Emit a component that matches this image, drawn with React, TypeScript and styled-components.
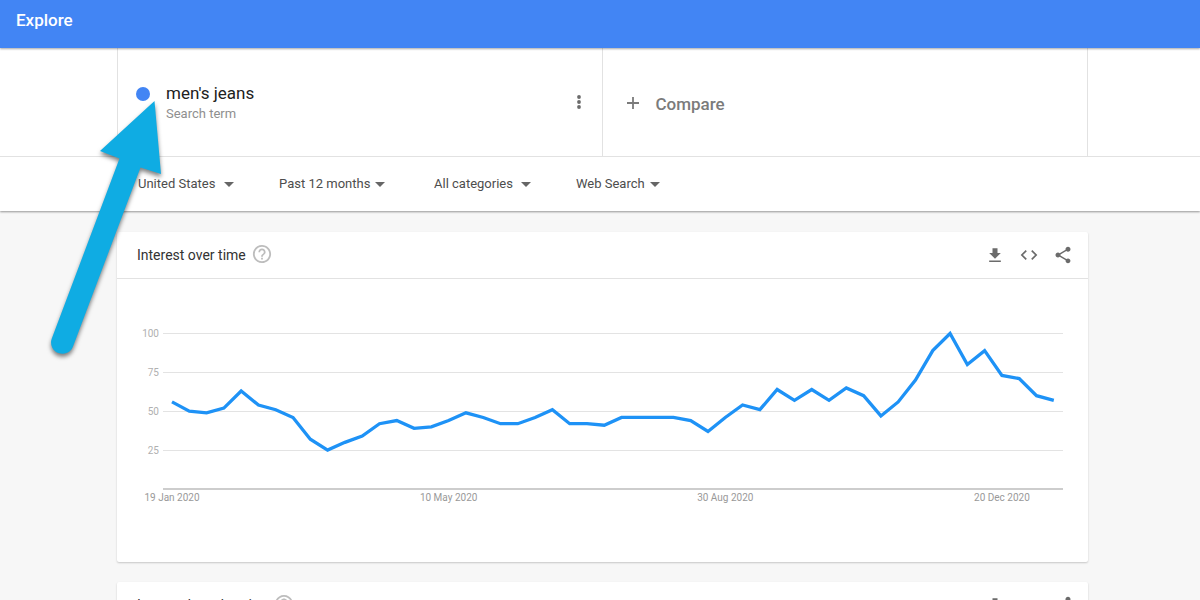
import React from "react";
import styled, { createGlobalStyle } from "styled-components";

const GlobalStyle = createGlobalStyle`
  *, *::before, *::after { box-sizing: border-box; }
  body {
    margin: 0;
    background: #f7f7f7;
    color: #212121;
    font-family: Roboto, "Liberation Sans", sans-serif;
  }
`;

const Page = styled.div`
  position: relative;
  height: 100vh;
  overflow: hidden;
`;

const AppBar = styled.header`
  position: relative;
  z-index: 1;
  display: flex;
  align-items: center;
  height: 48px;
  padding: 0 16px 8px;
  background: #4285f4;
  box-shadow: 0 1px 2px rgba(0, 0, 0, 0.35);
`;

const AppTitle = styled.h1`
  margin: 0;
  color: #fff;
  font-size: 17px;
  font-weight: 500;
  line-height: 24px;
`;

const Controls = styled.section`
  position: relative;
  background: #fff;
  box-shadow: 0 1px 2px rgba(0, 0, 0, 0.4);
`;

const TermBar = styled.div`
  padding: 0 112px 0 117px;
  border-bottom: 1px solid #e2e2e2;
`;

const Terms = styled.div`
  display: grid;
  grid-template-columns: 1fr 1fr;
  height: 108px;
  border: solid #e2e2e2;
  border-width: 0 1px;
`;

const Term = styled.div`
  display: flex;
  align-items: flex-start;
  padding: 33px 15px 0 18px;
  border-right: 1px solid #e2e2e2;
`;

const Dot = styled.span`
  width: 14px;
  height: 14px;
  margin: 6px 16px 0 0;
  border-radius: 50%;
  background: #4285f4;
`;

const TermText = styled.div`
  flex: 1;
`;

const TermName = styled.div`
  font-size: 17px;
  line-height: 24px;
`;

const TermKind = styled.div`
  color: #8f8f8f;
  font-size: 13px;
  line-height: 18px;
`;

const IconButton = styled.button`
  display: flex;
  padding: 0;
  border: 0;
  background: none;
  color: #6b6b6b;
  cursor: pointer;
`;

const MenuButton = styled(IconButton)`
  margin-top: 13px;
`;

const CompareButton = styled.button`
  display: flex;
  align-items: center;
  gap: 13px;
  padding: 4px 0 0 20px;
  border: 0;
  background: none;
  color: #7b7b7b;
  font: 500 17px/24px Roboto, "Liberation Sans", sans-serif;
  cursor: pointer;
`;

const Filters = styled.div`
  display: grid;
  grid-template-columns: 141px 155px 142px auto;
  align-items: center;
  height: 54px;
  padding: 0 112px 0 138px;
`;

const FilterBox = styled.div<{ $width: number }>`
  position: relative;
  width: ${(p) => p.$width}px;
`;

const FilterSelect = styled.select`
  display: block;
  width: 100%;
  margin: 0;
  padding: 0;
  border: 0;
  appearance: none;
  background: none;
  color: #4d4d4d;
  font: 13px/20px Roboto, "Liberation Sans", sans-serif;
`;

const Caret = styled.svg`
  position: absolute;
  top: 8px;
  right: 0;
  pointer-events: none;
`;

const Main = styled.main`
  display: flex;
  flex-direction: column;
  gap: 20px;
  padding: 21px 112px 0 117px;
`;

const Card = styled.section`
  background: #fff;
  border-radius: 2px;
  box-shadow: 0 1px 2px rgba(0, 0, 0, 0.2);
`;

const CardHeader = styled.header`
  display: flex;
  align-items: center;
  height: 47px;
  padding: 0 15px 0 20px;
  border-bottom: 1px solid #e2e2e2;
`;

const CardTitle = styled.h2`
  margin: 0;
  color: #333;
  font-size: 14px;
  font-weight: 400;
  line-height: 20px;
`;

const HelpButton = styled(IconButton)`
  margin: 0 auto 2px 6px;
  color: #bdbdbd;
`;

const Actions = styled.div`
  display: flex;
  align-items: center;
  gap: 14px;
`;

const ChartBox = styled.div`
  padding-bottom: 1px;
`;

const ChartSvg = styled.svg`
  display: block;
  width: 100%;
  height: auto;
  font-family: Roboto, "Liberation Sans", sans-serif;
  font-size: 10px;
`;

const Pointer = styled.svg`
  position: absolute;
  top: 90px;
  left: 40px;
  z-index: 2;
  pointer-events: none;
  filter: drop-shadow(0 3px 2px rgba(0, 0, 0, 0.5));
`;

const WEEKLY = [
  56, 50, 49, 52, 63, 54, 51, 46, 32, 25, 30, 34, 42, 44, 39, 40, 44, 49, 46,
  42, 42, 46, 51, 42, 42, 41, 46, 46, 46, 46, 44, 37, 46, 54, 51, 64, 57, 64,
  57, 65, 60, 47, 56, 70, 89, 100, 80, 89, 73, 71, 60, 57,
];

const DATES = [
  { week: 0, label: "19 Jan 2020" },
  { week: 16, label: "10 May 2020" },
  { week: 32, label: "30 Aug 2020" },
  { week: 48, label: "20 Dec 2020" },
];

const weekX = (week: number) => 55 + week * 17.29;
const valueY = (value: number) => 210 - value * 1.555;

const FILTERS = [
  { name: "Region", value: "United States", width: 96 },
  { name: "Time range", value: "Past 12 months", width: 106 },
  { name: "Category", value: "All categories", width: 97 },
  { name: "Search type", value: "Web Search", width: 84 },
];

function HelpIcon() {
  return (
    <svg width="20" height="20" viewBox="1 1 22 22" fill="currentColor">
      <path d="M11 18h2v-2h-2v2zm1-16C6.480 2 2 6.480 2 12s4.480 10 10 10 10-4.480 10-10S17.520 2 12 2zm0 18c-4.410 0-8-3.590-8-8s3.590-8 8-8 8 3.590 8 8-3.590 8-8 8zm0-14c-2.210 0-4 1.790-4 4h2c0-1.100.9-2 2-2s2 .9 2 2c0 2-3 1.750-3 5h2c0-2.250 3-2.500 3-5 0-2.210-1.790-4-4-4z" />
    </svg>
  );
}

function DownloadIcon() {
  return (
    <svg width="20" height="20" viewBox="0 0 24 24" fill="currentColor">
      <path d="M19 9.500h-4V4H9v5.500H5l7 7 7-7zM5 18.500v2h14v-2H5z" />
    </svg>
  );
}

function EmbedIcon() {
  return (
    <svg width="20" height="20" viewBox="0 0 24 24" fill="currentColor">
      <path d="M9.400 16.600L4.800 12l4.600-4.600L8 6l-6 6 6 6 1.400-1.400zm5.200 0l4.600-4.600-4.600-4.600L16 6l6 6-6 6-1.400-1.400z" />
    </svg>
  );
}

function ShareIcon() {
  return (
    <svg width="20" height="20" viewBox="0 0 24 24" fill="currentColor">
      <path d="M18 16.080c-.76 0-1.440.3-1.960.77L8.910 12.700c.05-.23.09-.46.09-.7s-.04-.47-.09-.7l7.050-4.110c.54.5 1.250.81 2.040.81 1.660 0 3-1.340 3-3s-1.340-3-3-3-3 1.340-3 3c0 .24.04.47.09.7L8.040 9.810C7.500 9.310 6.790 9 6 9c-1.660 0-3 1.340-3 3s1.340 3 3 3c.79 0 1.500-.31 2.040-.81l7.120 4.160c-.05.21-.08.43-.08.65 0 1.610 1.310 2.920 2.920 2.920s2.920-1.310 2.920-2.920-1.310-2.920-2.920-2.920z" />
    </svg>
  );
}

function WidgetHeader({ title }: { title: string }) {
  return (
    <CardHeader>
      <CardTitle>{title}</CardTitle>
      <HelpButton aria-label="Help">
        <HelpIcon />
      </HelpButton>
      <Actions>
        <IconButton aria-label="Download">
          <DownloadIcon />
        </IconButton>
        <IconButton aria-label="Embed">
          <EmbedIcon />
        </IconButton>
        <IconButton aria-label="Share">
          <ShareIcon />
        </IconButton>
      </Actions>
    </CardHeader>
  );
}

function InterestChart() {
  const line = WEEKLY.map((v, i) => `${weekX(i)},${valueY(v)}`).join(" ");
  return (
    <ChartBox>
      <ChartSvg viewBox="0 0 971 282" role="img" aria-label="Interest over time">
        {[100, 75, 50, 25].map((v) => (
          <g key={v}>
            <line
              x1="46"
              x2="946"
              y1={Math.floor(valueY(v)) + 0.5}
              y2={Math.floor(valueY(v)) + 0.5}
              stroke="#e3e3e3"
            />
            <text x="42" y={Math.floor(valueY(v)) + 4} textAnchor="end" fill="#b0b0b0">
              {v}
            </text>
          </g>
        ))}
        <line x1="46" x2="946" y1="210" y2="210" stroke="#bdbdbd" strokeWidth="1.500" />
        <polyline points={line} fill="none" stroke="#1e92f6" strokeWidth="3.300" />
        {DATES.map((d) => (
          <text key={d.week} x={weekX(d.week)} y="222" textAnchor="middle" fill="#999">
            {d.label}
          </text>
        ))}
      </ChartSvg>
    </ChartBox>
  );
}

export default function App() {
  return (
    <Page>
      <GlobalStyle />
      <AppBar>
        <AppTitle>Explore</AppTitle>
      </AppBar>
      <Controls>
        <TermBar>
          <Terms>
            <Term>
              <Dot />
              <TermText>
                <TermName>men's jeans</TermName>
                <TermKind>Search term</TermKind>
              </TermText>
              <MenuButton aria-label="Term options">
                <svg width="16" height="16" viewBox="0 0 16 16" fill="currentColor">
                  <circle cx="8" cy="3" r="1.900" />
                  <circle cx="8" cy="8" r="1.900" />
                  <circle cx="8" cy="13" r="1.900" />
                </svg>
              </MenuButton>
            </Term>
            <CompareButton>
              <svg width="20" height="20" viewBox="0 0 20 20" stroke="currentColor" strokeWidth="1.800">
                <path d="M10 3v12M4 9h12" />
              </svg>
              Compare
            </CompareButton>
          </Terms>
        </TermBar>
        <Filters>
          {FILTERS.map((f) => (
            <FilterBox key={f.name} $width={f.width}>
              <FilterSelect aria-label={f.name} defaultValue={f.value}>
                <option>{f.value}</option>
              </FilterSelect>
              <Caret width="10" height="5" viewBox="0 0 10 5" fill="#666">
                <path d="M0 0h10L5 5z" />
              </Caret>
            </FilterBox>
          ))}
        </Filters>
      </Controls>
      <Main>
        <Card>
          <WidgetHeader title="Interest over time" />
          <InterestChart />
        </Card>
        <Card>
          <WidgetHeader title="Interest by subregion" />
        </Card>
      </Main>
      <Pointer width="140" height="280" viewBox="40 90 140 280" aria-hidden="true">
        <path
          d="M154.500 101L161 174L140.500 167.500L73 346.500A11.300 11.300 0 0 1 51.800 338.500L119.500 158.500L100 151Z"
          fill="#0face3"
        />
      </Pointer>
    </Page>
  );
}
